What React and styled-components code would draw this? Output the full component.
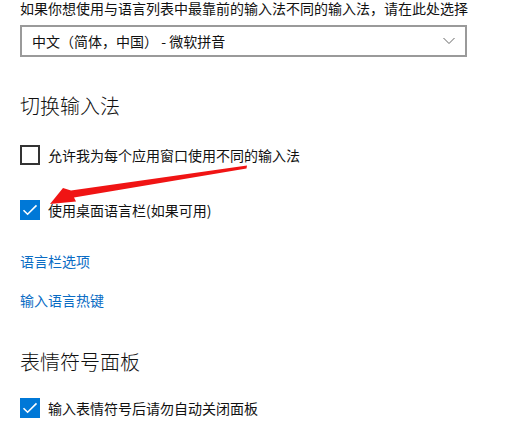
import React from "react";
import styled, { createGlobalStyle } from "styled-components";

const Global = createGlobalStyle`
  html, body { margin: 0; padding: 0; background: #fff; }
  body { font-family: "Noto Sans CJK SC", "Noto Sans", sans-serif; color: #000; }
`;

const Page = styled.div`
  position: relative;
  width: 509px;
  height: 429px;
  overflow: hidden;
  padding-left: 20px;
  box-sizing: border-box;
  display: flex;
  flex-direction: column;
  align-items: flex-start;
`;

const Desc = styled.div`
  font-size: 14px;
  line-height: 16px;
  margin-top: 0;
  white-space: nowrap;
  color: #111;
`;

const Select = styled.div`
  margin-top: 9px;
  width: 447px;
  height: 32px;
  box-sizing: border-box;
  border: 2px solid #9a9a9a;
  display: flex;
  align-items: center;
  justify-content: space-between;
  padding: 0 10px 0 10px;
  font-size: 14px;
  color: #111;
`;

const Heading = styled.div`
  margin-top: ${p => p.$mt}px;
  font-size: 20px;
  line-height: 28px;
  color: #111;
  font-weight: 300;
`;

const Row = styled.label`
  margin-top: ${p => p.$mt}px;
  display: flex;
  align-items: center;
  gap: 8px;
  height: 20px;
  font-size: 14px;
  color: #111;
`;

const Box = styled.span`
  width: 20px;
  height: 20px;
  box-sizing: border-box;
  display: inline-flex;
  align-items: center;
  justify-content: center;
  border: 2px solid ${p => (p.$checked ? "#0078d7" : "#333")};
  background: ${p => (p.$checked ? "#0078d7" : "#fff")};
`;

const Link = styled.a`
  margin-top: ${p => p.$mt}px;
  font-size: 14px;
  line-height: 20px;
  color: #0a6cc4;
  text-decoration: none;
`;

const Overlay = styled.svg`
  position: absolute;
  left: 0;
  top: 0;
  pointer-events: none;
`;

const Check = () => (
  <svg width="16" height="16" viewBox="0 0 16 16">
    <path d="M1.5 8.2 L5.6 12.2 L14.5 3.4" fill="none" stroke="#fff" strokeWidth="1.6" />
  </svg>
);

const Chevron = () => (
  <svg width="12" height="8" viewBox="0 0 12 8">
    <path d="M0.5 1 L6 6.5 L11.5 1" fill="none" stroke="#666" strokeWidth="1" />
  </svg>
);

export default function App() {
  return (
    <>
      <Global />
      <Page>
        <Desc>如果你想使用与语言列表中最靠前的输入法不同的输入法，请在此处选择</Desc>
        <Select>
          <span>中文（简体，中国） - 微软拼音</span>
          <Chevron />
        </Select>
        <Heading $mt={35}>切换输入法</Heading>
        <Row $mt={25}>
          <Box />
          <span>允许我为每个应用窗口使用不同的输入法</span>
        </Row>
        <Row $mt={35}>
          <Box $checked>
            <Check />
          </Box>
          <span>使用桌面语言栏(如果可用)</span>
        </Row>
        <Link $mt={31}>语言栏选项</Link>
        <Link $mt={19}>输入语言热键</Link>
        <Heading $mt={38}>表情符号面板</Heading>
        <Row $mt={22}>
          <Box $checked>
            <Check />
          </Box>
          <span>输入表情符号后请勿自动关闭面板</span>
        </Row>
        <Overlay width="509" height="429" viewBox="0 0 509 429">
          <polygon
            points="247,165.5 246.5,168.5 74,197.5 76,201.5 50,204 63,188 71,190.5"
            fill="#f01414"
          />
        </Overlay>
      </Page>
    </>
  );
}
